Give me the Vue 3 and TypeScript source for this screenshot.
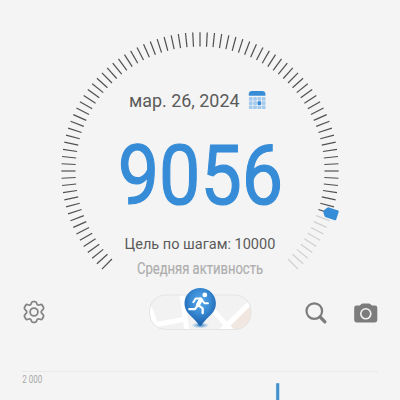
<script setup lang="ts">
interface Tick {
  angle: number
  done: boolean
}

const steps = 9056
const goal = 10000
const sweep = 270
const markerAngle = Math.floor(((steps / goal) * sweep) / 3) * 3 - sweep / 2

const ticks: Tick[] = Array.from({ length: 91 }, (_, i) => {
  const angle = -135 + i * 3
  return { angle, done: angle <= markerAngle }
})

const cells = Array.from({ length: 12 }, (_, i) => ({
  x: 0.1 + (i % 4) * 4.3,
  y: 6 + Math.floor(i / 4) * 4.2,
  active: i === 6,
}))
</script>

<template>
  <main class="screen">
    <svg class="gauge" viewBox="0 0 400 284" width="400" height="284">
      <g transform="translate(200 171)">
        <line
          v-for="t in ticks"
          :key="t.angle"
          :class="['tick', { done: t.done }]"
          x1="0"
          x2="0"
          y1="-138.7"
          y2="-124.5"
          :transform="`rotate(${t.angle})`"
        />
        <path
          class="marker"
          :transform="`rotate(${markerAngle})`"
          d="M-4.2 -144.5H4.2Q5.2 -144.5 5.2 -143.5V-134Q5.2 -133 4.4 -132.3L1.4 -130.2Q0 -129.4 -1.4 -130.2L-4.4 -132.3Q-5.2 -133 -5.2 -134V-143.5Q-5.2 -144.5 -4.2 -144.5Z"
        />
      </g>
      <text class="date" x="129" y="107" textLength="110.5" lengthAdjust="spacingAndGlyphs">мар. 26, 2024</text>
      <g transform="translate(248.8 91.1)">
        <path class="cal-top" d="M0 4.6V3.2Q0 0 3.2 0H13.4Q16.6 0 16.6 3.2V4.6Z" />
        <rect
          v-for="(c, i) in cells"
          :key="i"
          :class="['cell', { active: c.active }]"
          :x="c.x"
          :y="c.y"
          width="3.7"
          height="3.6"
          rx=".7"
        />
      </g>
      <text class="count" x="117.7" y="204" textLength="165.5" lengthAdjust="spacingAndGlyphs">{{ steps }}</text>
      <text class="goal" x="124.6" y="249" textLength="150.7" lengthAdjust="spacingAndGlyphs">Цель по шагам: {{ goal }}</text>
      <text class="level" x="137" y="274.3" textLength="126" lengthAdjust="spacingAndGlyphs">Средняя активность</text>
    </svg>

    <nav class="toolbar">
      <svg class="gear" width="24" height="24" viewBox="0 0 24 24">
        <path d="M9.2 3.6Q9.5 1.7 11 1.7H13Q14.5 1.7 14.8 3.6Q15 4.9 16.3 5.1Q17 5.2 17.8 4.8Q19.5 4 20.3 5.3L21.4 7.2Q22.2 8.6 20.7 9.7Q19.2 10.8 19.2 12Q19.2 13.2 20.7 14.3Q22.2 15.4 21.4 16.8L20.3 18.7Q19.5 20 17.8 19.2Q17 18.8 16.3 18.9Q15 19.1 14.8 20.4Q14.5 22.3 13 22.3H11Q9.5 22.3 9.2 20.4Q9 19.1 7.7 18.9Q7 18.8 6.2 19.2Q4.5 20 3.7 18.7L2.6 16.8Q1.8 15.4 3.3 14.3Q4.8 13.2 4.8 12Q4.8 10.8 3.3 9.7Q1.8 8.6 2.6 7.2L3.7 5.3Q4.5 4 6.2 4.8Q7 5.2 7.7 5.1Q9 4.9 9.2 3.6Z" />
        <circle cx="12" cy="12" r="3.9" />
      </svg>

      <svg class="map" width="104" height="54" viewBox="148 282 104 54">
        <defs>
          <clipPath id="pill"><rect x="149.5" y="295" width="101.5" height="34.5" rx="16" /></clipPath>
          <radialGradient id="pin" cx=".5" cy=".36" r=".62">
            <stop offset="0" stop-color="#5aa8e8" />
            <stop offset=".5" stop-color="#3a8bd5" />
            <stop offset="1" stop-color="#1b60aa" />
          </radialGradient>
          <radialGradient id="shade">
            <stop offset="0" stop-color="#1768ae" stop-opacity=".9" />
            <stop offset="1" stop-color="#4d9bd8" stop-opacity="0" />
          </radialGradient>
        </defs>
        <g clip-path="url(#pill)">
          <rect x="149" y="294" width="103" height="37" fill="#f2f2f2" />
          <path d="M226 332L252 303V332Z" fill="#f1e7e0" />
          <g class="roads">
            <path d="M148 306Q151 309 155 324L156 331" />
            <path d="M154 325L186 319" />
            <path d="M182 294L187 331" />
            <path d="M211 308L233 332" />
            <path d="M220 332L252 301" />
          </g>
        </g>
        <rect x="149.5" y="295" width="101.5" height="34.5" rx="16" fill="none" stroke="#e4e4e4" />
        <ellipse cx="200.3" cy="325.3" rx="9" ry="3" fill="url(#shade)" />
        <path d="M200.2 288C191.4 288 184.5 294.8 184.5 303.3C184.5 311.5 190.3 315.3 195 320.2L199 325Q200.2 326.3 201.4 325L205.4 320.2C210.1 315.3 215.9 311.5 215.9 303.3C215.9 294.8 209 288 200.2 288Z" fill="url(#pin)" />
        <circle cx="204.8" cy="294.9" r="2.4" fill="#fff" />
        <g class="runner">
          <path d="M193.3 302.2L195.7 298.5L201 298.4L204.4 303.2H208" stroke-width="1.9" />
          <path d="M200.8 299.7L197.9 305" stroke-width="4" />
          <path d="M198.4 305.4L202.7 308.4V313.2" stroke-width="2.3" />
          <path d="M197.3 305.8L195 309.2H189.3" stroke-width="2.2" />
        </g>
      </svg>

      <div class="actions">
        <svg width="24" height="24" viewBox="0 0 24 24">
          <circle cx="10.3" cy="10.1" r="7.8" fill="none" stroke="#7c7c7c" stroke-width="2.2" />
          <path d="M16.2 16L20.9 20.8" stroke="#7c7c7c" stroke-width="3.3" stroke-linecap="round" />
        </svg>
        <svg width="24" height="24" viewBox="0 0 24 24">
          <path d="M2.4 4.6H5.8L7.4 2.9Q8 2.4 8.8 2.4H14.9Q15.7 2.4 16.3 2.9L17.9 4.6H21Q23.3 4.6 23.3 6.7V19.3Q23.3 21.4 21 21.4H2.4Q.2 21.4 .2 19.3V6.7Q.2 4.6 2.4 4.6Z" fill="#7c7c7c" />
          <circle cx="11.8" cy="12.8" r="5" fill="none" stroke="#f4f4f4" stroke-width="1.6" />
        </svg>
      </div>
    </nav>

    <section class="chart">
      <svg width="400" height="32" viewBox="0 0 400 32">
        <text class="axis" x="22.3" y="15" textLength="20" lengthAdjust="spacingAndGlyphs">2 000</text>
        <rect x="275.4" y="15.3" width="4.6" height="17" fill="#d9effc" />
        <rect x="276.2" y="15.2" width="3" height="17" fill="#458fc8" />
      </svg>
    </section>
  </main>
</template>

<style>
body {
  background: #f4f4f4;
  overflow: hidden;
}
</style>

<style scoped>
.screen {
  width: 400px;
  height: 400px;
  overflow: hidden;
  background: #f4f4f4;
  font-family: Roboto, "Liberation Sans", sans-serif;
  display: flex;
  flex-direction: column;
}
svg {
  display: block;
  flex: none;
}
.tick {
  stroke: #cfcfcf;
  stroke-width: 1.2;
}
.tick.done {
  stroke: #505050;
}
.marker,
.cal-top {
  fill: #368cd7;
}
.cell {
  fill: #a4cbed;
}
.cell.active {
  fill: #368cd7;
}
.date {
  font-size: 18px;
  fill: #5b5b5b;
}
.count {
  font-size: 84px;
  fill: #368cd7;
  stroke: #368cd7;
  stroke-width: 1.2px;
}
.goal {
  font-size: 15px;
  fill: #5a5a5a;
}
.level {
  font-size: 16.3px;
  fill: #aeaeae;
  stroke: #aeaeae;
  stroke-width: 0.2px;
}
.toolbar {
  height: 54px;
  margin-top: -2px;
  padding: 0 22px;
  display: grid;
  grid-template-columns: 1fr 104px 1fr;
  align-items: center;
}
.gear {
  margin-top: 6px;
  fill: none;
  stroke: #858585;
  stroke-width: 1.8;
}
.roads {
  fill: none;
  stroke: #fff;
  stroke-width: 5;
}
.runner {
  fill: none;
  stroke: #fff;
  stroke-linecap: round;
  stroke-linejoin: round;
}
.actions {
  display: flex;
  justify-content: flex-end;
  gap: 26px;
  margin-top: 7px;
}
.chart {
  margin-top: 32px;
  background: linear-gradient(#eaeaea, #eaeaea) 22px 3px / 356px 1px no-repeat;
}
.axis {
  font-size: 10px;
  fill: #a9a9a9;
}
</style>
